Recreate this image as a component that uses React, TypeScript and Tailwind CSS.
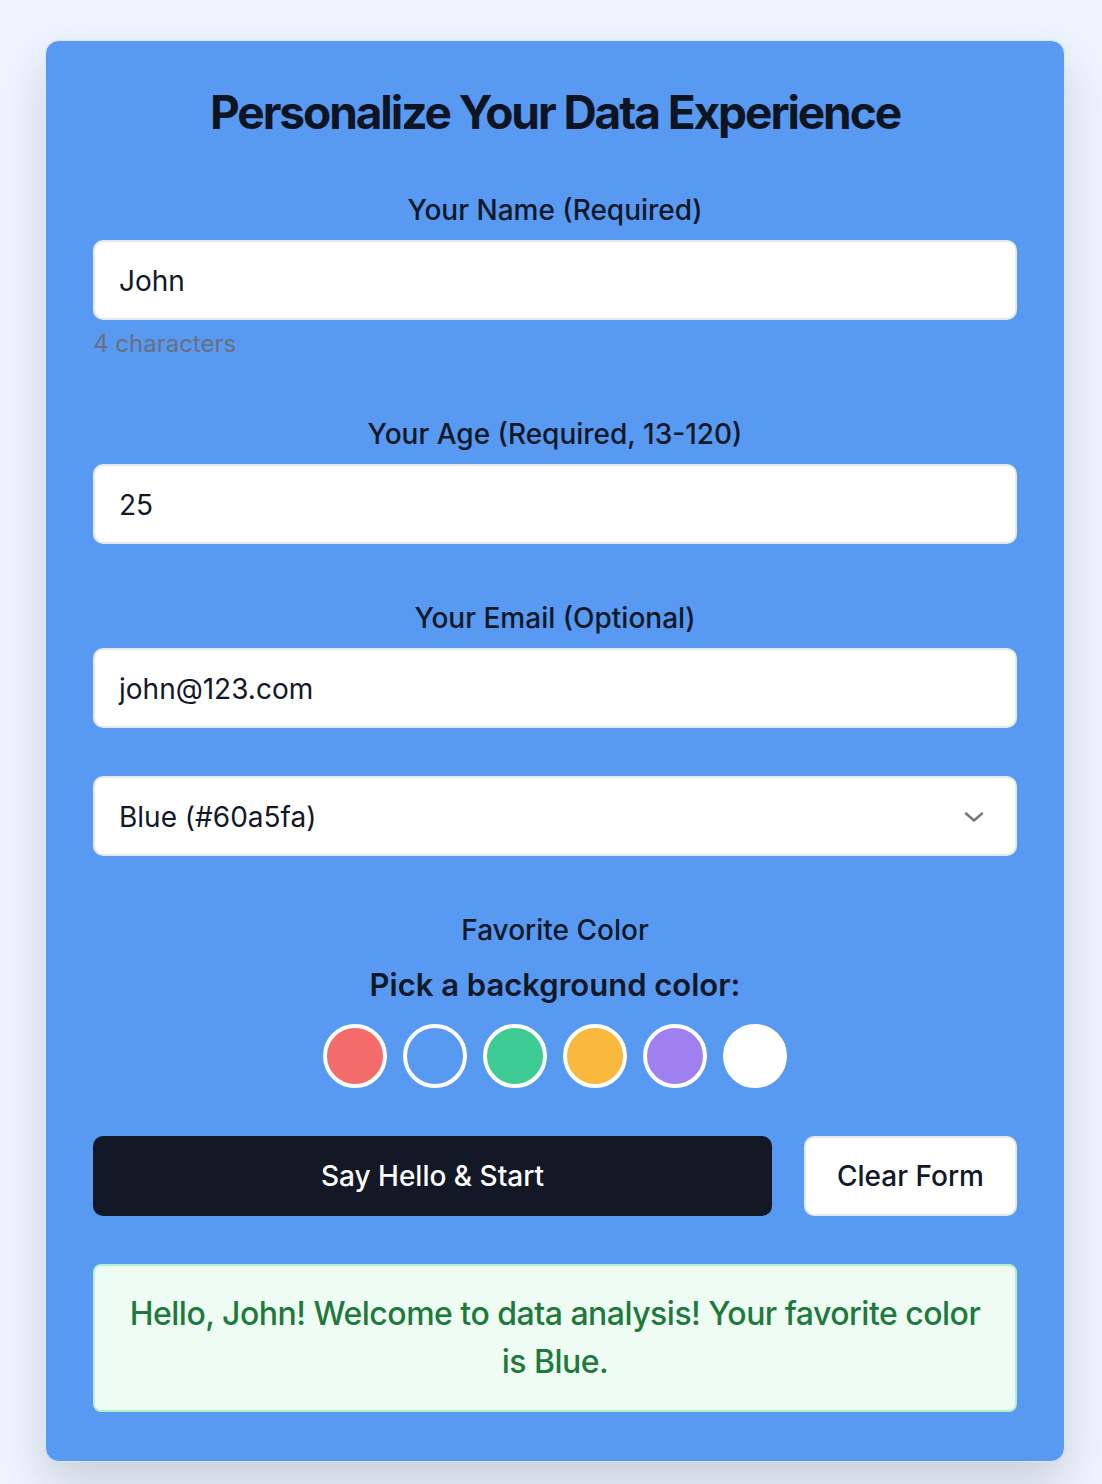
import React from "react";

const font = { fontFamily: 'Inter, "Noto Sans", sans-serif' };

function Field({ label, value, hint }: { label: string; value: string; hint?: string }) {
  return (
    <div className="mb-[48px] pt-[6px]">
      <div className="mb-[10px] text-center text-[28px] leading-[40px] font-medium text-[#111827]">{label}</div>
      <div className="h-[80px] rounded-[10px] border-2 border-[#e3e8ef] bg-white flex items-center px-[24px] pt-[2px] text-[28px] text-[#111827]">
        {value}
      </div>
      {hint && <div className="mt-[8px] text-[24px] leading-[32px] text-[#687080]">{hint}</div>}
    </div>
  );
}

export default function App() {
  const circles = ["#f36b6b", "#5899f2", "#3ecb94", "#f9b73c", "#9e80f0"];
  return (
    <div className="min-h-[1484px] bg-[#eff5fe] pt-[40px]" style={font}>
      <div className="ml-[45px] w-[1020px] rounded-[14px] border border-[#dfe5ee] bg-[#5899f2] px-[47px] pt-[47px] pb-[49px] shadow-[0_24px_50px_rgba(30,41,59,0.18)]">
        <h1 className="mb-[48px] text-center text-[46px] leading-[48px] font-bold tracking-[-0.045em] text-[#0f1422]">
          Personalize Your Data Experience
        </h1>
        <Field label="Your Name (Required)" value="John" hint="4 characters" />
        <Field label="Your Age (Required, 13-120)" value="25" />
        <Field label="Your Email (Optional)" value="john@123.com" />
        <div className="mb-[48px] h-[80px] rounded-[10px] border-2 border-[#e3e8ef] bg-white flex items-center justify-between pl-[24px] pr-[31px] pt-[2px] text-[28px] text-[#111827]">
          <span>Blue (#60a5fa)</span>
          <svg width="20" height="12" viewBox="0 0 20 12" fill="none">
            <path d="M2 2.5l8 7 8-7" stroke="#74787f" strokeWidth="2.5" strokeLinecap="round" strokeLinejoin="round" />
          </svg>
        </div>
        <div className="pt-[6px] text-center text-[28px] leading-[40px] font-medium text-[#111827]">Favorite Color</div>
        <div className="mt-[11px] text-center text-[31px] leading-[48px] font-semibold text-[#111827]">Pick a background color:</div>
        <div className="mt-[15px] flex justify-center gap-[16px]">
          {circles.map((c) => (
            <div key={c} className="h-[64px] w-[64px] rounded-full border-4 border-white" style={{ backgroundColor: c }} />
          ))}
          <div className="h-[64px] w-[64px] rounded-full border-4 border-white bg-white" />
        </div>
        <div className="mt-[48px] flex gap-[32px]">
          <button className="h-[80px] flex-1 rounded-[10px] bg-[#121826] text-[28px] font-medium text-white">
            Say Hello &amp; Start
          </button>
          <button className="h-[80px] w-[213px] rounded-[10px] border-2 border-[#e3e8ef] bg-white text-[28px] font-medium text-[#111827]">
            Clear Form
          </button>
        </div>
        <div className="mt-[48px] rounded-[8px] border-2 border-[#b5f0cc] bg-[#effcf3] p-[24px] text-center text-[32px] leading-[48px] font-medium tracking-[-0.016em] text-[#1e7a3c]">
          Hello, John! Welcome to data analysis! Your favorite color is Blue.
        </div>
      </div>
    </div>
  );
}
